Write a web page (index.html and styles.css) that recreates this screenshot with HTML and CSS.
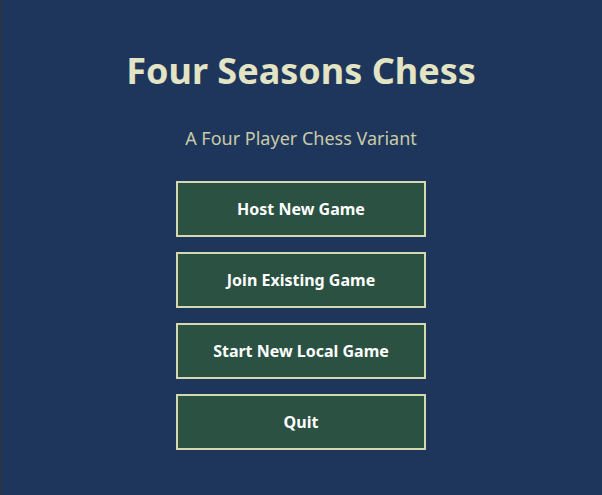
FILE: index.html
```html
<!DOCTYPE html>
<html>
<head>
<meta charset="utf-8">
<link rel="stylesheet" href="styles.css">
</head>
<body>
<main class="menu">
  <h1 class="title">Four Seasons Chess</h1>
  <p class="subtitle">A Four Player Chess Variant</p>
  <div class="buttons">
    <button class="btn">Host New Game</button>
    <button class="btn">Join Existing Game</button>
    <button class="btn">Start New Local Game</button>
    <button class="btn">Quit</button>
  </div>
</main>
</body>
</html>
```
FILE: styles.css
```css
html, body {
  margin: 0;
  height: 100%;
}
body {
  background: #1f365c;
  box-shadow: inset 1px 0 0 #333333;
  font-family: "Noto Sans", "Open Sans", sans-serif;
}
.menu {
  display: flex;
  flex-direction: column;
  align-items: center;
  padding-top: 49px;
}
.title {
  margin: 0;
  font-size: 36px;
  font-weight: 700;
  color: #e2e4c4;
  line-height: 44px;
}
.subtitle {
  margin: 33px 0 0 0;
  font-size: 18px;
  color: #c8cba8;
  line-height: 24px;
}
.buttons {
  margin-top: 31px;
  display: flex;
  flex-direction: column;
  gap: 15px;
}
.btn {
  width: 250px;
  height: 56px;
  background: #2a5142;
  border: 2px solid #d4d8ae;
  color: #ffffff;
  font-family: "Noto Sans", "Open Sans", sans-serif;
  font-size: 16px;
  font-weight: 700;
  padding: 0;
}
```
